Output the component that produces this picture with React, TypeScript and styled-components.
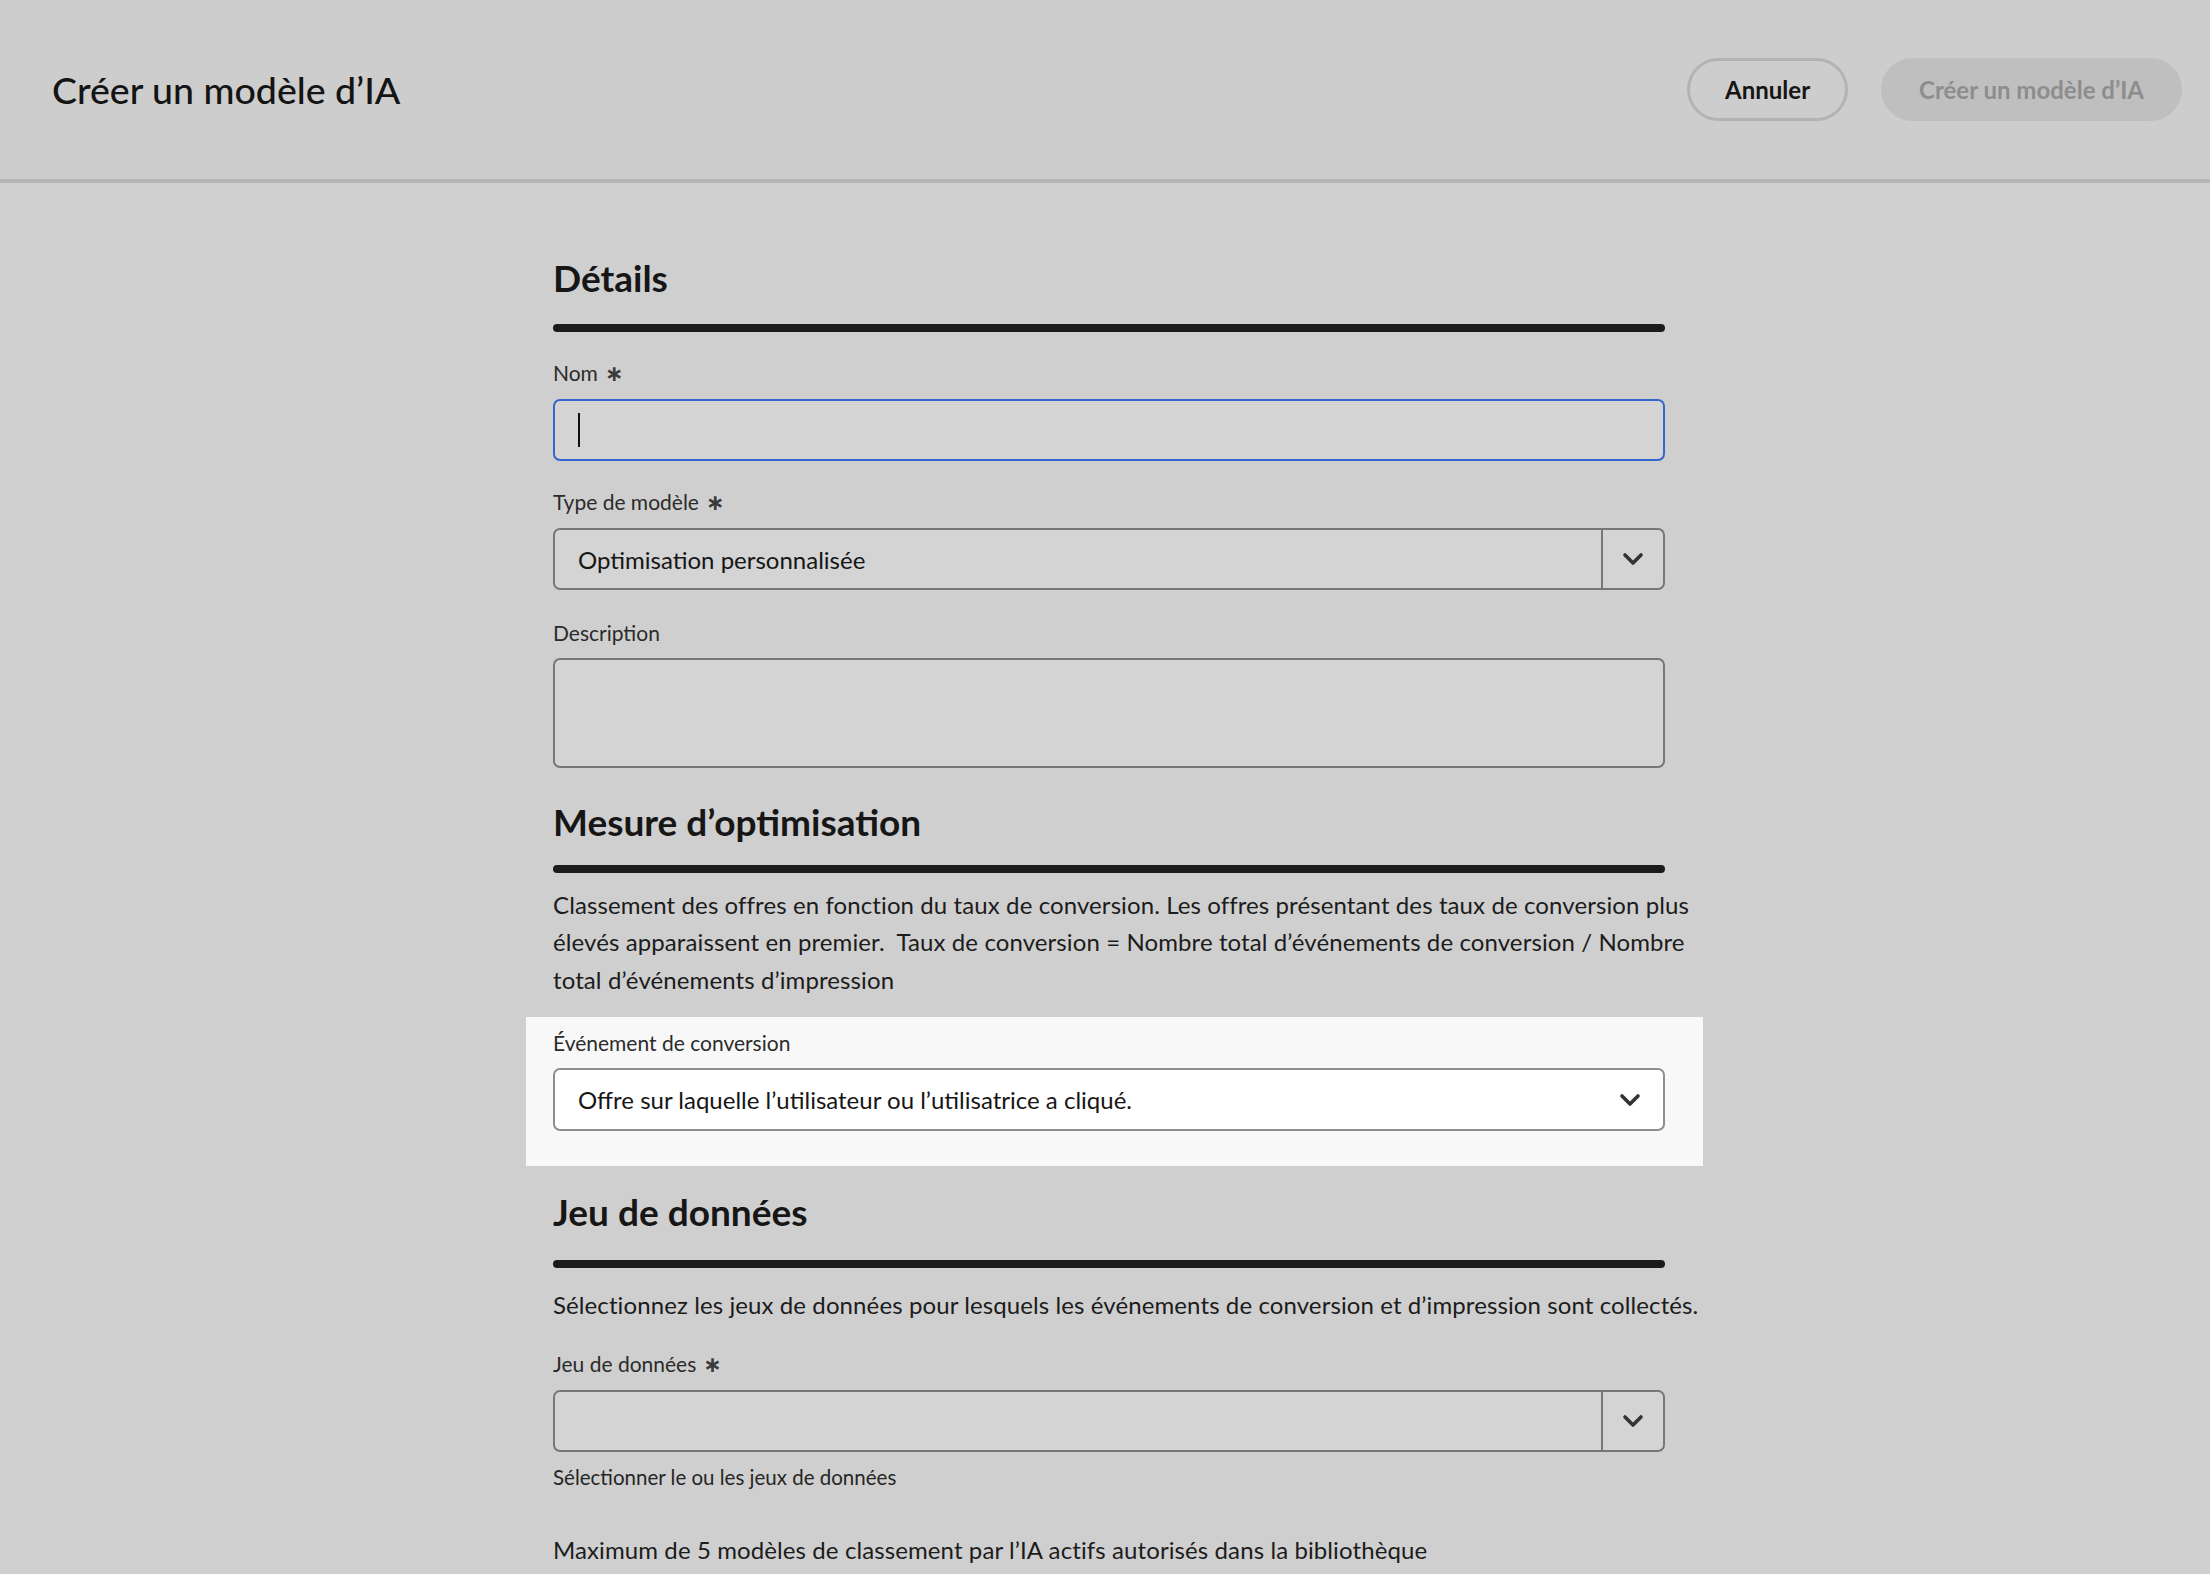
import { FC } from "react"
import styled, { createGlobalStyle } from "styled-components"

const GlobalStyle = createGlobalStyle`
  html, body {
    margin: 0;
    padding: 0;
    background: #cfcfcf;
    font-family: Lato, "Open Sans", "Liberation Sans", sans-serif;
    color: #1c1c1c;
  }
  * {
    box-sizing: border-box;
  }
`

const Header = styled.header`
  height: 183px;
  display: flex;
  align-items: center;
  justify-content: space-between;
  padding: 0 28px 0 52px;
  background: #cdcdcd;
  border-bottom: 4px solid #b5b5b5;
`

const Title = styled.h1`
  margin: 0;
  font-size: 37.5px;
  font-weight: 500;
  color: #141414;
`

const Actions = styled.div`
  display: flex;
  align-items: center;
  gap: 33px;
`

const Button = styled.button<{ $variant: "outline" | "disabled" }>`
  height: 63px;
  padding: 0 35px;
  border-radius: 32px;
  font-family: inherit;
  font-size: 24px;
  font-weight: 700;
  border: 3px solid ${(p) => (p.$variant === "outline" ? "#b3b3b3" : "#bfbfbf")};
  background: ${(p) => (p.$variant === "outline" ? "transparent" : "#bfbfbf")};
  color: ${(p) => (p.$variant === "outline" ? "#151515" : "#8d8d8d")};
`

const Main = styled.main`
  width: 1120px;
  margin: 0 auto;
  padding: 73px 0 0 8px;
`

const Heading = styled.h2<{ $gap?: number }>`
  margin: ${(p) => p.$gap ?? 0}px 0 0;
  font-size: 37px;
  line-height: 1.2;
  font-weight: 700;
  color: #161616;
`

const Rule = styled.div<{ $gap?: number }>`
  margin-top: ${(p) => p.$gap ?? 24}px;
  height: 8px;
  border-radius: 4px;
  background: #1b1b1b;
`

const Group = styled.div<{ $gap?: number }>`
  margin-top: ${(p) => p.$gap ?? 28}px;
  display: flex;
  flex-direction: column;
`

const Label = styled.label`
  font-size: 21px;
  line-height: 25px;
  color: #2b2b2b;
  margin-bottom: 13px;
`

const Required = styled.span`
  margin-left: 7px;
  font-family: "DejaVu Sans", sans-serif;
  font-size: 22px;
  font-weight: 700;
  color: #3a3a3a;
`

const TextField = styled.div<{ $focused?: boolean }>`
  height: 62px;
  display: flex;
  align-items: center;
  padding-left: 23px;
  background: #d4d4d4;
  border: 2px solid ${(p) => (p.$focused ? "#3367cf" : "#777777")};
  border-radius: 7px;
`

const Caret = styled.span`
  width: 2px;
  height: 34px;
  background: #111;
`

const TextArea = styled.div`
  height: 110px;
  background: #d4d4d4;
  border: 2px solid #777777;
  border-radius: 7px;
`

const Picker = styled.div<{ $light?: boolean }>`
  height: ${(p) => (p.$light ? 63 : 62)}px;
  display: flex;
  align-items: stretch;
  background: ${(p) => (p.$light ? "#ffffff" : "#d4d4d4")};
  border: 2px solid ${(p) => (p.$light ? "#8e8e8e" : "#777777")};
  border-radius: 7px;
`

const PickerValue = styled.div`
  flex: 1;
  display: flex;
  align-items: center;
  padding-left: 23px;
  font-size: 24px;
  color: #161616;
`

const PickerButton = styled.div<{ $divided?: boolean }>`
  width: ${(p) => (p.$divided ? 62 : 66)}px;
  display: flex;
  align-items: center;
  justify-content: center;
  border-left: ${(p) => (p.$divided ? "2px solid #777777" : "none")};
`

const Text = styled.p<{ $gap?: number }>`
  margin: ${(p) => p.$gap ?? 0}px 0 0;
  font-size: 24px;
  line-height: 37.5px;
  letter-spacing: 0.1px;
  color: #1c1c1c;
  white-space: nowrap;
`

const Helper = styled.div`
  margin-top: 13px;
  font-size: 20.5px;
  line-height: 24px;
  color: #262626;
`

const Highlight = styled.div`
  margin: 19px -38px 0 -27px;
  padding: 13px 38px 35px 27px;
  background: #f8f8f8;
`

const Chevron: FC = () => (
  <svg width="22" height="14" viewBox="0 0 22 14">
    <polyline
      points="3,3 11,11 19,3"
      fill="none"
      stroke="#333333"
      strokeWidth="3.6"
      strokeLinecap="round"
      strokeLinejoin="round"
    />
  </svg>
)

const Select: FC<{ value?: string; light?: boolean }> = ({ value, light }) => (
  <Picker $light={light}>
    <PickerValue>{value}</PickerValue>
    <PickerButton $divided={!light}>
      <Chevron />
    </PickerButton>
  </Picker>
)

const App: FC = () => {
  return (
    <>
      <GlobalStyle />
      <Header>
        <Title>Créer un modèle d’IA</Title>
        <Actions>
          <Button $variant="outline">Annuler</Button>
          <Button $variant="disabled">Créer un modèle d’IA</Button>
        </Actions>
      </Header>

      <Main>
        <Heading>Détails</Heading>
        <Rule />
        <Group $gap={28}>
          <Label>
            Nom<Required>∗</Required>
          </Label>
          <TextField $focused>
            <Caret />
          </TextField>
        </Group>
        <Group>
          <Label>
            Type de modèle<Required>∗</Required>
          </Label>
          <Select value="Optimisation personnalisée" />
        </Group>
        <Group $gap={30}>
          <Label>Description</Label>
          <TextArea />
        </Group>

        <Heading $gap={32}>Mesure d’optimisation</Heading>
        <Rule $gap={20} />
        <Text $gap={13}>
          Classement des offres en fonction du taux de conversion. Les offres présentant des taux de conversion plus
          <br />
          élevés apparaissent en premier.&nbsp; Taux de conversion = Nombre total d’événements de conversion / Nombre
          <br />
          total d’événements d’impression
        </Text>
        <Highlight>
          <Label as="div">Événement de conversion</Label>
          <Select light value="Offre sur laquelle l’utilisateur ou l’utilisatrice a cliqué." />
        </Highlight>

        <Heading $gap={24}>Jeu de données</Heading>
        <Rule $gap={25} />
        <Text $gap={18}>
          Sélectionnez les jeux de données pour lesquels les événements de conversion et d’impression sont collectés.
        </Text>
        <Group $gap={28}>
          <Label>
            Jeu de données<Required>∗</Required>
          </Label>
          <Select />
          <Helper>Sélectionner le ou les jeux de données</Helper>
        </Group>
        <Text $gap={42}>Maximum de 5 modèles de classement par l’IA actifs autorisés dans la bibliothèque</Text>
      </Main>
    </>
  )
}

export default App
